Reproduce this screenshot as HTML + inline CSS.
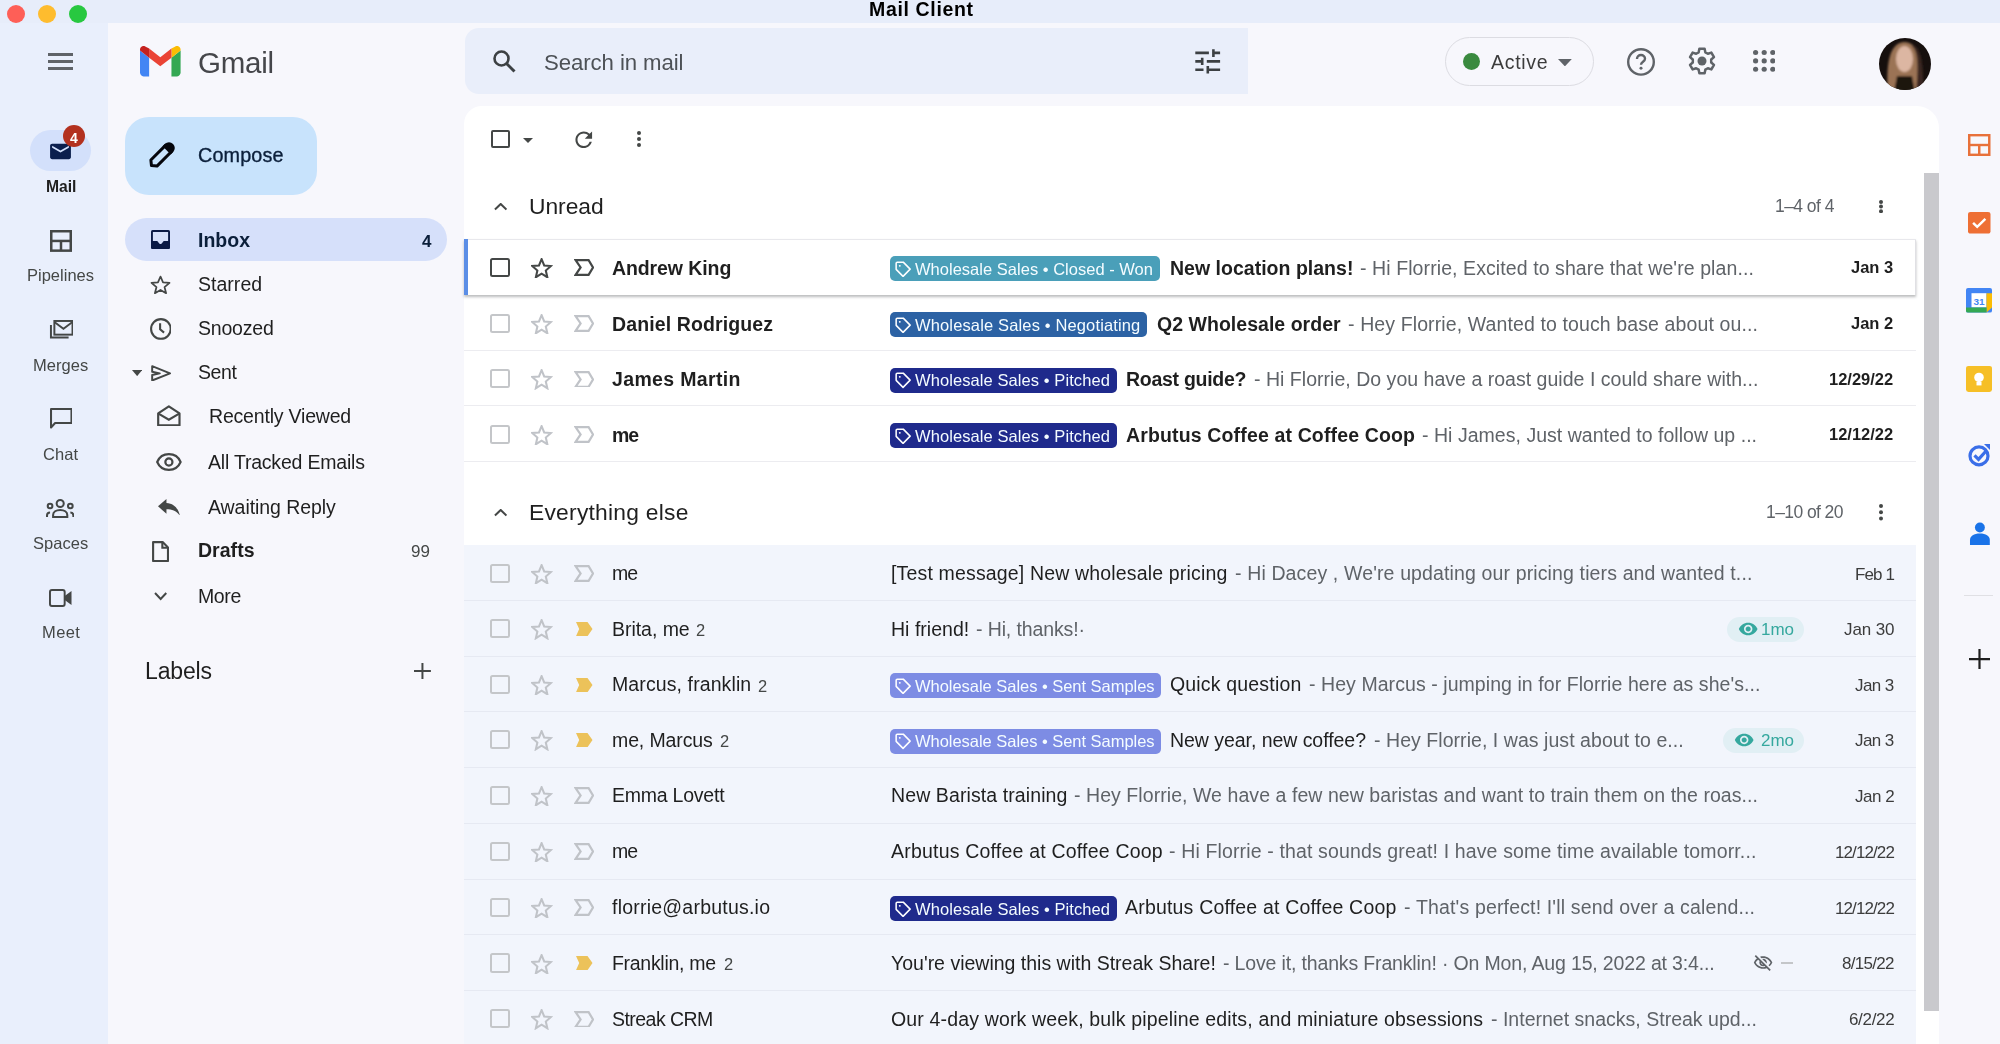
<!DOCTYPE html>
<html><head><meta charset="utf-8"><title>Mail Client</title>
<style>
html,body{margin:0;padding:0;width:2000px;height:1044px;overflow:hidden;background:#f7f7fc;}
body{position:relative;font-family:"Liberation Sans",sans-serif;}
.a{position:absolute;display:block;}
.t{position:absolute;white-space:nowrap;line-height:1;will-change:transform;}
</style></head><body>
<div class="a" style="left:0.00px;top:0.00px;width:2000.00px;height:23.00px;background:#e7edfa"></div>
<div class="a" style="left:0.00px;top:23.00px;width:108.00px;height:1021.00px;background:#e9effc"></div>
<div class="a" style="left:108.00px;top:23.00px;width:1892.00px;height:1021.00px;background:#f7f7fc"></div>
<div class="a" style="left:7.00px;top:5.00px;width:18.00px;height:18.00px;border-radius:50%;background:#fe5f57"></div>
<div class="a" style="left:37.50px;top:5.00px;width:18.00px;height:18.00px;border-radius:50%;background:#febc2e"></div>
<div class="a" style="left:68.50px;top:5.00px;width:18.00px;height:18.00px;border-radius:50%;background:#28c840"></div>
<div class="t " style="top:-0.01px;font-size:19.5px;color:#000;font-weight:bold;letter-spacing:0.649px;left:0.00px;left:868.75px">Mail Client</div>
<div class="a" style="left:48.00px;top:53.25px;width:25.00px;height:2.50px;background:#5f6368"></div>
<div class="a" style="left:48.00px;top:60.25px;width:25.00px;height:2.50px;background:#5f6368"></div>
<div class="a" style="left:48.00px;top:67.25px;width:25.00px;height:2.50px;background:#5f6368"></div>
<div class="a" style="left:30.00px;top:130.00px;width:60.70px;height:41.00px;border-radius:21px;background:#d3e0fb"></div>
<svg class="a" style="left:48.00px;top:140.00px;width:25.00px;height:23.00px;" viewBox="0 0 24 24" preserveAspectRatio="none"><path fill="#0b1f4d" d="M20 4H4c-1.1 0-2 .9-2 2v12c0 1.1.9 2 2 2h16c1.1 0 2-.9 2-2V6c0-1.1-.9-2-2-2zm0 4l-8 5-8-5V6l8 5 8-5v2z"/></svg>
<div class="a" style="left:63.30px;top:124.90px;width:22.00px;height:22.00px;border-radius:50%;background:#b3311f"></div>
<div class="t " style="top:130.75px;font-size:14px;color:#fff;font-weight:bold;left:0.00px;left:70.3px">4</div>
<div class="t " style="top:179.31px;font-size:15.7px;color:#1f1f1f;font-weight:bold;letter-spacing:-0.011px;left:45.50px;">Mail</div>
<svg class="a" style="left:49.70px;top:229.80px;width:22.00px;height:21.90px;" viewBox="0 0 22 22" preserveAspectRatio="none"><rect x="1.25" y="1.25" width="19.5" height="19.5" fill="none" stroke="#444746" stroke-width="2.5"/><line x1="1" y1="11" x2="21" y2="11" stroke="#444746" stroke-width="2.5"/><line x1="11" y1="11" x2="11" y2="21" stroke="#444746" stroke-width="2.5"/></svg>
<div class="t " style="top:267.33px;font-size:16.5px;color:#444746;letter-spacing:0.005px;left:27.00px;">Pipelines</div>
<svg class="a" style="left:47.50px;top:319.50px;width:25.50px;height:21.50px;" viewBox="0 0 26 22" preserveAspectRatio="none"><rect x="6.5" y="1" width="18.5" height="14" fill="none" stroke="#444746" stroke-width="2"/><path d="M6.5 2l9.25 7 9.25-7" fill="none" stroke="#444746" stroke-width="2"/><path d="M3 5v13h18" fill="none" stroke="#444746" stroke-width="2"/></svg>
<div class="t " style="top:357.13px;font-size:16.5px;color:#444746;letter-spacing:0.036px;left:32.80px;">Merges</div>
<svg class="a" style="left:49.50px;top:408.00px;width:22.50px;height:21.00px;" viewBox="0 0 22 21" preserveAspectRatio="none"><path d="M1 1h20v14H5l-4 4.5z" fill="none" stroke="#444746" stroke-width="2" stroke-linejoin="round"/></svg>
<div class="t " style="top:446.03px;font-size:16.5px;color:#444746;letter-spacing:0.115px;left:42.80px;">Chat</div>
<svg class="a" style="left:46.00px;top:499.00px;width:28.40px;height:19.00px;" viewBox="0 0 28 19" preserveAspectRatio="none"><circle cx="14" cy="4.5" r="3.5" fill="none" stroke="#444746" stroke-width="2"/><circle cx="4" cy="7" r="2.3" fill="none" stroke="#444746" stroke-width="2"/><circle cx="24" cy="7" r="2.3" fill="none" stroke="#444746" stroke-width="2"/><path d="M7 18v-2c0-3 3-5 7-5s7 2 7 5v2z" fill="none" stroke="#444746" stroke-width="2"/><path d="M1 18v-1.5c0-2 1-3 3-3M27 18v-1.5c0-2-1-3-3-3" fill="none" stroke="#444746" stroke-width="2"/></svg>
<div class="t " style="top:534.93px;font-size:16.5px;color:#444746;letter-spacing:0.033px;left:32.80px;">Spaces</div>
<svg class="a" style="left:48.50px;top:589.00px;width:23.50px;height:18.00px;" viewBox="0 0 24 18" preserveAspectRatio="none"><rect x="1" y="1" width="15" height="16" rx="2" fill="none" stroke="#444746" stroke-width="2"/><path d="M16 7l7-5v14l-7-5z" fill="#444746"/></svg>
<div class="t " style="top:623.63px;font-size:16.5px;color:#444746;letter-spacing:0.406px;left:41.80px;">Meet</div>
<svg class="a" style="left:140.20px;top:46.20px;width:40.60px;height:30.40px;" viewBox="0 0 40 30" preserveAspectRatio="none"><path d="M0 4.5v21.5c0 2 1.3 4 3.5 4H9V11.5z" fill="#4285f4"/><path d="M31 11.5V30h5.5c2.2 0 3.5-2 3.5-4V4.5z" fill="#34a853"/><path d="M31 2.5v9l9-7v-1c0-3-3.4-4.6-5.6-2.8z" fill="#fbbc04"/><path d="M9 11.5v-9l11 8.5 11-8.5v9l-11 8.5z" fill="#ea4335"/><path d="M0 3.5v1l9 7v-9L5.6.7C3.4-1.1 0 .5 0 3.5z" fill="#c5221f"/></svg>
<div class="t " style="top:48.23px;font-size:29.5px;color:#45464a;letter-spacing:-0.259px;left:198.00px;">Gmail</div>
<div class="a" style="left:124.50px;top:117.00px;width:192.50px;height:78.00px;border-radius:24px;background:#c8e3fc"></div>
<svg class="a" style="left:146.70px;top:141.70px;width:28.00px;height:28.00px;" viewBox="0 0 28 28" preserveAspectRatio="none"><g transform="rotate(-45 14 14)"><path d="M0.5 14L4 9.7H25v8.6H4z" fill="none" stroke="#05060c" stroke-width="3" stroke-linejoin="round"/><path d="M22 8.2h3.3a5.8 5.8 0 0 1 0 11.6H22z" fill="#05060c"/></g></svg>
<div class="t " style="top:146.14px;font-size:19.8px;color:#0b1f3a;letter-spacing:0.126px;left:197.50px;-webkit-text-stroke:0.35px #0b1f3a">Compose</div>
<div class="a" style="left:124.50px;top:218.00px;width:322.50px;height:43.00px;border-radius:22px;background:#d6e0fa"></div>
<svg class="a" style="left:151.00px;top:230.00px;width:19.00px;height:19.20px;" viewBox="0 0 19 19.2" preserveAspectRatio="none"><rect x="0" y="0" width="19" height="19.2" rx="1.6" fill="#0b1a45"/><path d="M1.9 1.9h15.2v9.2h-4.1c-.6 0-1 .9-1.6 1.7-.7.9-1.2 1.3-1.9 1.3s-1.2-.4-1.9-1.3c-.6-.8-1-1.7-1.6-1.7H1.9z" fill="#d6e0fa"/></svg>
<div class="t " style="top:230.59px;font-size:19.5px;color:#0b1f3a;font-weight:bold;letter-spacing:0.001px;left:197.70px;">Inbox</div>
<div class="t " style="top:232.71px;font-size:17px;color:#0b1f3a;font-weight:bold;right:1569.00px;">4</div>
<svg class="a" style="left:150.00px;top:275.00px;width:21.00px;height:19.50px;" viewBox="0 0 24 23" preserveAspectRatio="none"><path d="M12 1.8l2.9 6.9 7.4.6-5.7 4.9 1.8 7.3L12 17.6l-6.4 3.9 1.8-7.3L1.7 9.3l7.4-.6z" fill="none" stroke="#444746" stroke-width="2" stroke-linejoin="round"/></svg>
<div class="t " style="top:274.79px;font-size:19.5px;color:#1f1f1f;letter-spacing:0.025px;left:197.60px;">Starred</div>
<svg class="a" style="left:149.70px;top:317.80px;width:21.80px;height:21.90px;" viewBox="0 0 22 22" preserveAspectRatio="none"><circle cx="11" cy="11" r="9.9" fill="none" stroke="#444746" stroke-width="2.1"/><path d="M10.2 5.2v6.2l4 3.3" fill="none" stroke="#444746" stroke-width="2.1"/></svg>
<div class="t " style="top:319.09px;font-size:19.5px;color:#1f1f1f;letter-spacing:-0.197px;left:197.60px;">Snoozed</div>
<svg class="a" style="left:131.70px;top:369.80px;width:10.30px;height:6.10px;" viewBox="0 0 10 6" preserveAspectRatio="none"><path d="M0 0h10L5 6z" fill="#444746"/></svg>
<svg class="a" style="left:150.70px;top:364.80px;width:20.50px;height:16.70px;" viewBox="0 0 21 17" preserveAspectRatio="none"><path d="M1.2 1.2L19.5 8.5 1.2 15.8V10.2L9 8.5 1.2 6.8z" fill="none" stroke="#444746" stroke-width="2" stroke-linejoin="round"/></svg>
<div class="t " style="top:363.09px;font-size:19.5px;color:#1f1f1f;letter-spacing:-0.438px;left:197.60px;">Sent</div>
<svg class="a" style="left:157.00px;top:404.80px;width:23.70px;height:21.60px;" viewBox="0 0 24 22" preserveAspectRatio="none"><path d="M1.2 8.5L12 1.3l10.8 7.2V20.8H1.2z" fill="none" stroke="#444746" stroke-width="2.2" stroke-linejoin="round"/><path d="M1.5 8.8L12 15l10.5-6.2" fill="none" stroke="#444746" stroke-width="2.2"/></svg>
<div class="t " style="top:407.09px;font-size:19.5px;color:#1f1f1f;letter-spacing:-0.192px;left:208.80px;">Recently Viewed</div>
<svg class="a" style="left:156.00px;top:453.00px;width:25.80px;height:18.00px;" viewBox="0 0 26 18" preserveAspectRatio="none"><path d="M13 1.2C7.3 1.2 3 4.8 1.2 9 3 13.2 7.3 16.8 13 16.8S23 13.2 24.8 9C23 4.8 18.7 1.2 13 1.2z" fill="none" stroke="#444746" stroke-width="2.2"/><circle cx="13" cy="9" r="3.6" fill="none" stroke="#444746" stroke-width="2.2"/></svg>
<div class="t " style="top:452.69px;font-size:19.5px;color:#1f1f1f;letter-spacing:-0.205px;left:208.40px;">All Tracked Emails</div>
<svg class="a" style="left:157.90px;top:498.50px;width:21.90px;height:16.70px;" viewBox="0 0 22 17" preserveAspectRatio="none"><path d="M8.5 0L0 7.5 8.5 15V10.5c6 0 10 1.8 13.5 6.5C20.5 10 16.5 4.5 8.5 4z" fill="#444746"/></svg>
<div class="t " style="top:497.59px;font-size:19.5px;color:#1f1f1f;letter-spacing:-0.064px;left:208.40px;">Awaiting Reply</div>
<svg class="a" style="left:151.90px;top:540.90px;width:17.10px;height:21.10px;" viewBox="0 0 17 21" preserveAspectRatio="none"><path d="M1.1 1.1h9.5l5.3 5.3v13.5H1.1z" fill="none" stroke="#444746" stroke-width="2.1" stroke-linejoin="round"/><path d="M10.3 1.1v5.6h5.6" fill="none" stroke="#444746" stroke-width="2.1"/></svg>
<div class="t " style="top:541.09px;font-size:19.5px;color:#1f1f1f;font-weight:bold;letter-spacing:0.030px;left:198.00px;">Drafts</div>
<div class="t " style="top:543.21px;font-size:17px;color:#444746;right:1570.00px;">99</div>
<svg class="a" style="left:154.00px;top:592.00px;width:13.30px;height:8.60px;" viewBox="0 0 13 8" preserveAspectRatio="none"><path d="M1 1l5.5 5.5L12 1" fill="none" stroke="#444746" stroke-width="2"/></svg>
<div class="t " style="top:587.09px;font-size:19.5px;color:#1f1f1f;letter-spacing:-0.377px;left:198.00px;">More</div>
<div class="t " style="top:659.53px;font-size:23px;color:#1f1f1f;letter-spacing:-0.136px;left:144.90px;">Labels</div>
<svg class="a" style="left:413.90px;top:663.00px;width:16.90px;height:16.00px;" viewBox="0 0 17 16" preserveAspectRatio="none"><path d="M8.5 0v16M0 8h17" stroke="#444746" stroke-width="2"/></svg>
<div class="a" style="left:464.50px;top:28.00px;width:783.50px;height:66.00px;border-radius:14px 0 0 14px;background:#e9eefa"></div>
<svg class="a" style="left:492.00px;top:49.00px;width:24.00px;height:24.00px;" viewBox="0 0 24 24" preserveAspectRatio="none"><circle cx="9.5" cy="9.5" r="7" fill="none" stroke="#3c4043" stroke-width="2.6"/><path d="M14.5 14.5l8 8" stroke="#3c4043" stroke-width="3"/></svg>
<div class="t " style="top:52.41px;font-size:22.2px;color:#4d5156;letter-spacing:-0.082px;left:544.00px;">Search in mail</div>
<svg class="a" style="left:1194.00px;top:48.00px;width:28.00px;height:27.00px;" viewBox="0 0 28 27" preserveAspectRatio="none"><path d="M1.3 4.9H14.9M19.4 1.3V9M19.4 4.9H26.1M1.3 13.4H8.2M8.2 9.7V17M12.8 13.4H26.1M1.3 21.7H9.5M13.8 17.9V25.4M13.8 21.7H26.1" stroke="#3c4043" stroke-width="2.6" fill="none"/></svg>
<div class="a" style="left:1444.70px;top:36.60px;width:149.20px;height:49.40px;border-radius:25px;border:1.5px solid #dcdce2;box-sizing:border-box"></div>
<div class="a" style="left:1462.50px;top:53.30px;width:17.00px;height:17.00px;border-radius:50%;background:#3a8a3f"></div>
<div class="t " style="top:53.19px;font-size:19.5px;color:#3c3c3c;letter-spacing:0.700px;left:1491.00px;">Active</div>
<svg class="a" style="left:1558.00px;top:58.60px;width:13.80px;height:7.40px;" viewBox="0 0 14 7" preserveAspectRatio="none"><path d="M0 0h14L7 7z" fill="#5f6368"/></svg>
<svg class="a" style="left:1627.00px;top:47.80px;width:28.00px;height:27.80px;" viewBox="0 0 28 28" preserveAspectRatio="none"><circle cx="14" cy="14" r="12.8" fill="none" stroke="#5f6368" stroke-width="2.4"/><path d="M10 11c0-2.3 1.8-4 4-4s4 1.7 4 3.8c0 3-4 3-4 6" fill="none" stroke="#5f6368" stroke-width="2.4"/><circle cx="14" cy="20.5" r="1.5" fill="#5f6368"/></svg>
<svg class="a" style="left:1687.30px;top:46.30px;width:30.00px;height:30.00px;" viewBox="0 0 30 30" preserveAspectRatio="none"><path d="M11.67 6.32 L12.38 2.68 L17.62 2.68 L18.33 6.32 L20.85 7.77 L24.36 6.57 L26.98 11.11 L24.19 13.55 L24.19 16.45 L26.98 18.89 L24.36 23.43 L20.85 22.23 L18.33 23.68 L17.62 27.32 L12.38 27.32 L11.67 23.68 L9.15 22.23 L5.64 23.43 L3.02 18.89 L5.81 16.45 L5.81 13.55 L3.02 11.11 L5.64 6.57 L9.15 7.77Z" fill="none" stroke="#5f6368" stroke-width="2.5" stroke-linejoin="round"/><circle cx="15" cy="15" r="4.5" fill="#5f6368"/></svg>
<svg class="a" style="left:1752.60px;top:50.40px;width:22.40px;height:21.80px;" viewBox="0 0 22 22" preserveAspectRatio="none"><circle cx="2.55" cy="2.55" r="2.55" fill="#5f6368"/><circle cx="2.55" cy="11.0" r="2.55" fill="#5f6368"/><circle cx="2.55" cy="19.45" r="2.55" fill="#5f6368"/><circle cx="11.0" cy="2.55" r="2.55" fill="#5f6368"/><circle cx="11.0" cy="11.0" r="2.55" fill="#5f6368"/><circle cx="11.0" cy="19.45" r="2.55" fill="#5f6368"/><circle cx="19.45" cy="2.55" r="2.55" fill="#5f6368"/><circle cx="19.45" cy="11.0" r="2.55" fill="#5f6368"/><circle cx="19.45" cy="19.45" r="2.55" fill="#5f6368"/></svg>
<svg class="a" style="left:1878.6px;top:38.2px;width:52px;height:52px" viewBox="0 0 52 52"><defs><clipPath id="av"><circle cx="26" cy="26" r="26"/></clipPath><filter id="bl"><feGaussianBlur stdDeviation="1.2"/></filter></defs><g clip-path="url(#av)"><rect width="52" height="52" fill="#160f0d"/><g filter="url(#bl)"><path d="M9 56 C7 30 9 5 25 4 C41 4 44 28 40 56z" fill="#9b7355"/><path d="M33 8 C40 14 39 34 37 56 L44 56 C45 30 43 10 33 6z" fill="#3a2820"/><ellipse cx="25.5" cy="21" rx="8.5" ry="13" fill="#dcb6a2"/><path d="M18 38h15l3 16H15z" fill="#1c1411"/></g></g></svg>
<div class="a" style="left:464.00px;top:106.00px;width:1475.00px;height:938.00px;background:#fff;border-top-right-radius:22px;border-top-left-radius:18px"></div>
<div class="a" style="left:490.50px;top:130.00px;width:19.20px;height:18.40px;border:2.2px solid #444746;border-radius:2px;box-sizing:border-box"></div>
<svg class="a" style="left:523.00px;top:137.50px;width:10.00px;height:5.00px;" viewBox="0 0 10 5" preserveAspectRatio="none"><path d="M0 0h10L5 5z" fill="#444746"/></svg>
<svg class="a" style="left:575.00px;top:131.00px;width:17.50px;height:17.50px;" viewBox="3.6 3.6 16.8 16.8" preserveAspectRatio="none"><path fill="#444746" d="M17.65 6.35A7.958 7.958 0 0 0 12 4c-4.42 0-7.99 3.58-7.99 8s3.57 8 7.99 8c3.73 0 6.84-2.55 7.73-6h-2.08A5.99 5.99 0 0 1 12 18c-3.31 0-6-2.69-6-6s2.69-6 6-6c1.66 0 3.14.69 4.22 1.78L13 11h7V4l-2.35 2.35z"/></svg>
<svg class="a" style="left:637.00px;top:131.00px;width:4.00px;height:16.00px;" viewBox="0 0 4 16" preserveAspectRatio="none"><circle cx="2" cy="2" r="2" fill="#444746"/><circle cx="2" cy="8" r="2" fill="#444746"/><circle cx="2" cy="14" r="2" fill="#444746"/></svg>
<div class="a" style="left:1924.30px;top:173.00px;width:14.60px;height:838.00px;background:#c9c9cd"></div>
<svg class="a" style="left:493.50px;top:203.40px;width:13.40px;height:7.50px;" viewBox="0 0 14 8" preserveAspectRatio="none"><path d="M1 7l6-6 6 6" fill="none" stroke="#444746" stroke-width="2.1"/></svg>
<div class="t " style="top:195.30px;font-size:22.8px;color:#1f1f1f;letter-spacing:-0.016px;left:529.40px;">Unread</div>
<div class="t " style="top:197.59px;font-size:17.5px;color:#5f6368;letter-spacing:-0.550px;left:1775.20px;">1–4 of 4</div>
<svg class="a" style="left:1878.60px;top:199.70px;width:4.00px;height:13.20px;" viewBox="0 0 4 13.20" preserveAspectRatio="none"><circle cx="2" cy="2" r="2" fill="#444746"/><circle cx="2" cy="6.60" r="2" fill="#444746"/><circle cx="2" cy="11.20" r="2" fill="#444746"/></svg>
<svg class="a" style="left:493.50px;top:509.40px;width:13.40px;height:7.50px;" viewBox="0 0 14 8" preserveAspectRatio="none"><path d="M1 7l6-6 6 6" fill="none" stroke="#444746" stroke-width="2.1"/></svg>
<div class="t " style="top:501.30px;font-size:22.8px;color:#1f1f1f;letter-spacing:0.251px;left:529.40px;">Everything else</div>
<div class="t " style="top:503.59px;font-size:17.5px;color:#5f6368;letter-spacing:-0.580px;left:1766.00px;">1–10 of 20</div>
<svg class="a" style="left:1878.60px;top:504.20px;width:4.00px;height:16.50px;" viewBox="0 0 4 16.50" preserveAspectRatio="none"><circle cx="2" cy="2" r="2" fill="#444746"/><circle cx="2" cy="8.25" r="2" fill="#444746"/><circle cx="2" cy="14.50" r="2" fill="#444746"/></svg>
<div class="a" style="left:464.00px;top:461.00px;width:1452.00px;height:1.00px;background:#ececf0"></div>
<div class="a" style="left:464.00px;top:349.80px;width:1452.00px;height:1.00px;background:#ececf0"></div>
<div class="a" style="left:464.00px;top:405.30px;width:1452.00px;height:1.00px;background:#ececf0"></div>
<div class="a" style="left:464.00px;top:460.80px;width:1452.00px;height:1.00px;background:#ececf0"></div>
<div class="a" style="left:464.00px;top:239.00px;width:1452.00px;height:56.40px;background:#fff;box-shadow:0 1.5px 2.5px rgba(60,64,67,.35), inset 0 1px 0 #e8e8ec, inset -1px 0 0 #e0e0e4;"></div>
<div class="a" style="left:464.30px;top:239.00px;width:3.70px;height:56.00px;background:#5b8ee6"></div>
<div class="a" style="left:490.30px;top:257.70px;width:19.50px;height:19.30px;border:2px solid #444746;border-radius:2.5px;box-sizing:border-box"></div>
<svg class="a" style="left:531.40px;top:257.90px;width:21.20px;height:20.60px;" viewBox="0.6 0.8 22.8 21.6" preserveAspectRatio="none"><path d="M12 2L14.81 8.63L22 9.24L16.54 13.97L18.18 21L12 17.27L5.82 21L7.46 13.97L2 9.24L9.19 8.63Z" fill="none" stroke="#444746" stroke-width="2.2" stroke-linejoin="miter" stroke-miterlimit="3"/></svg>
<svg class="a" style="left:574.10px;top:259.00px;width:20.30px;height:16.90px;" viewBox="0 0 20.3 16.9" preserveAspectRatio="none"><path d="M1.6 1.1H14.6L19 8.45L14.6 15.8H1.6L6.6 8.45Z" fill="none" stroke="#444746" stroke-width="2.2" stroke-linejoin="miter"/></svg>
<div class="t " style="top:258.89px;font-size:19.5px;color:#1f1f1f;font-weight:bold;letter-spacing:-0.095px;left:611.70px;">Andrew King</div>
<div class="a" style="left:889.60px;top:256.30px;width:270.10px;height:25.00px;border-radius:5px;background:#4a9fb9"></div>
<svg class="a" style="left:895.30px;top:260.80px;width:16.30px;height:16.50px;" viewBox="0 0 17 17" preserveAspectRatio="none"><path d="M1.2 8.6V2.4c0-.7.5-1.2 1.2-1.2h6.2l7.2 7.2-7.4 7.4z" fill="none" stroke="#fff" stroke-width="1.6" stroke-linejoin="round"/><circle cx="5" cy="5" r="1" fill="#fff"/></svg>
<div class="t " style="top:260.93px;font-size:16.5px;color:#f4fcff;letter-spacing:0.017px;left:915.40px;">Wholesale Sales • Closed - Won</div>
<div class="t " style="top:258.89px;font-size:19.5px;color:#1f1f1f;font-weight:bold;letter-spacing:0.016px;left:1169.60px;">New location plans!</div>
<div class="t " style="top:258.89px;font-size:19.5px;color:#5f6368;letter-spacing:0.089px;left:1360.00px;">- Hi Florrie, Excited to share that we're plan...</div>
<div class="t " style="top:259.23px;font-size:16.5px;color:#1f1f1f;font-weight:bold;right:106.50px;">Jan 3</div>
<div class="a" style="left:490.30px;top:313.70px;width:19.50px;height:19.30px;border:2px solid #c4c6c9;border-radius:2.5px;box-sizing:border-box"></div>
<svg class="a" style="left:531.40px;top:313.90px;width:21.20px;height:20.60px;" viewBox="0.6 0.8 22.8 21.6" preserveAspectRatio="none"><path d="M12 2L14.81 8.63L22 9.24L16.54 13.97L18.18 21L12 17.27L5.82 21L7.46 13.97L2 9.24L9.19 8.63Z" fill="none" stroke="#c0c3c8" stroke-width="2.2" stroke-linejoin="miter" stroke-miterlimit="3"/></svg>
<svg class="a" style="left:574.10px;top:315.00px;width:20.30px;height:16.90px;" viewBox="0 0 20.3 16.9" preserveAspectRatio="none"><path d="M1.6 1.1H14.6L19 8.45L14.6 15.8H1.6L6.6 8.45Z" fill="none" stroke="#c0c3c8" stroke-width="2.2" stroke-linejoin="miter"/></svg>
<div class="t " style="top:314.89px;font-size:19.5px;color:#1f1f1f;font-weight:bold;letter-spacing:0.115px;left:611.70px;">Daniel Rodriguez</div>
<div class="a" style="left:889.60px;top:312.30px;width:257.40px;height:25.00px;border-radius:5px;background:#2c62a4"></div>
<svg class="a" style="left:895.30px;top:316.80px;width:16.30px;height:16.50px;" viewBox="0 0 17 17" preserveAspectRatio="none"><path d="M1.2 8.6V2.4c0-.7.5-1.2 1.2-1.2h6.2l7.2 7.2-7.4 7.4z" fill="none" stroke="#fff" stroke-width="1.6" stroke-linejoin="round"/><circle cx="5" cy="5" r="1" fill="#fff"/></svg>
<div class="t " style="top:316.93px;font-size:16.5px;color:#f4fcff;letter-spacing:0.142px;left:915.40px;">Wholesale Sales • Negotiating</div>
<div class="t " style="top:314.89px;font-size:19.5px;color:#1f1f1f;font-weight:bold;letter-spacing:0.027px;left:1156.60px;">Q2 Wholesale order</div>
<div class="t " style="top:314.89px;font-size:19.5px;color:#5f6368;letter-spacing:0.114px;left:1347.50px;">- Hey Florrie, Wanted to touch base about ou...</div>
<div class="t " style="top:315.23px;font-size:16.5px;color:#1f1f1f;font-weight:bold;right:106.50px;">Jan 2</div>
<div class="a" style="left:490.30px;top:369.20px;width:19.50px;height:19.30px;border:2px solid #c4c6c9;border-radius:2.5px;box-sizing:border-box"></div>
<svg class="a" style="left:531.40px;top:369.40px;width:21.20px;height:20.60px;" viewBox="0.6 0.8 22.8 21.6" preserveAspectRatio="none"><path d="M12 2L14.81 8.63L22 9.24L16.54 13.97L18.18 21L12 17.27L5.82 21L7.46 13.97L2 9.24L9.19 8.63Z" fill="none" stroke="#c0c3c8" stroke-width="2.2" stroke-linejoin="miter" stroke-miterlimit="3"/></svg>
<svg class="a" style="left:574.10px;top:370.50px;width:20.30px;height:16.90px;" viewBox="0 0 20.3 16.9" preserveAspectRatio="none"><path d="M1.6 1.1H14.6L19 8.45L14.6 15.8H1.6L6.6 8.45Z" fill="none" stroke="#c0c3c8" stroke-width="2.2" stroke-linejoin="miter"/></svg>
<div class="t " style="top:370.39px;font-size:19.5px;color:#1f1f1f;font-weight:bold;letter-spacing:0.351px;left:611.70px;">James Martin</div>
<div class="a" style="left:889.60px;top:367.80px;width:227.00px;height:25.00px;border-radius:5px;background:#1f2a8c"></div>
<svg class="a" style="left:895.30px;top:372.30px;width:16.30px;height:16.50px;" viewBox="0 0 17 17" preserveAspectRatio="none"><path d="M1.2 8.6V2.4c0-.7.5-1.2 1.2-1.2h6.2l7.2 7.2-7.4 7.4z" fill="none" stroke="#fff" stroke-width="1.6" stroke-linejoin="round"/><circle cx="5" cy="5" r="1" fill="#fff"/></svg>
<div class="t " style="top:372.43px;font-size:16.5px;color:#f4fcff;letter-spacing:0.084px;left:915.40px;">Wholesale Sales • Pitched</div>
<div class="t " style="top:370.39px;font-size:19.5px;color:#1f1f1f;font-weight:bold;letter-spacing:-0.282px;left:1126.00px;">Roast guide?</div>
<div class="t " style="top:370.39px;font-size:19.5px;color:#5f6368;letter-spacing:0.025px;left:1254.40px;">- Hi Florrie, Do you have a roast guide I could share with...</div>
<div class="t " style="top:370.73px;font-size:16.5px;color:#1f1f1f;font-weight:bold;right:106.50px;">12/29/22</div>
<div class="a" style="left:490.30px;top:424.70px;width:19.50px;height:19.30px;border:2px solid #c4c6c9;border-radius:2.5px;box-sizing:border-box"></div>
<svg class="a" style="left:531.40px;top:424.90px;width:21.20px;height:20.60px;" viewBox="0.6 0.8 22.8 21.6" preserveAspectRatio="none"><path d="M12 2L14.81 8.63L22 9.24L16.54 13.97L18.18 21L12 17.27L5.82 21L7.46 13.97L2 9.24L9.19 8.63Z" fill="none" stroke="#c0c3c8" stroke-width="2.2" stroke-linejoin="miter" stroke-miterlimit="3"/></svg>
<svg class="a" style="left:574.10px;top:426.00px;width:20.30px;height:16.90px;" viewBox="0 0 20.3 16.9" preserveAspectRatio="none"><path d="M1.6 1.1H14.6L19 8.45L14.6 15.8H1.6L6.6 8.45Z" fill="none" stroke="#c0c3c8" stroke-width="2.2" stroke-linejoin="miter"/></svg>
<div class="t " style="top:425.89px;font-size:19.5px;color:#1f1f1f;font-weight:bold;letter-spacing:-1.184px;left:611.70px;">me</div>
<div class="a" style="left:889.60px;top:423.30px;width:227.00px;height:25.00px;border-radius:5px;background:#1f2a8c"></div>
<svg class="a" style="left:895.30px;top:427.80px;width:16.30px;height:16.50px;" viewBox="0 0 17 17" preserveAspectRatio="none"><path d="M1.2 8.6V2.4c0-.7.5-1.2 1.2-1.2h6.2l7.2 7.2-7.4 7.4z" fill="none" stroke="#fff" stroke-width="1.6" stroke-linejoin="round"/><circle cx="5" cy="5" r="1" fill="#fff"/></svg>
<div class="t " style="top:427.93px;font-size:16.5px;color:#f4fcff;letter-spacing:0.084px;left:915.40px;">Wholesale Sales • Pitched</div>
<div class="t " style="top:425.89px;font-size:19.5px;color:#1f1f1f;font-weight:bold;letter-spacing:0.146px;left:1126.00px;">Arbutus Coffee at Coffee Coop</div>
<div class="t " style="top:425.89px;font-size:19.5px;color:#5f6368;letter-spacing:0.031px;left:1422.40px;">- Hi James, Just wanted to follow up ...</div>
<div class="t " style="top:426.23px;font-size:16.5px;color:#1f1f1f;font-weight:bold;right:106.50px;">12/12/22</div>
<div class="a" style="left:464.00px;top:545.00px;width:1452.00px;height:499.00px;background:#f2f5fc"></div>
<div class="a" style="left:464.00px;top:600.00px;width:1452.00px;height:1.00px;background:#e6e9f2"></div>
<div class="a" style="left:464.00px;top:655.50px;width:1452.00px;height:1.00px;background:#e6e9f2"></div>
<div class="a" style="left:464.00px;top:711.00px;width:1452.00px;height:1.00px;background:#e6e9f2"></div>
<div class="a" style="left:464.00px;top:766.50px;width:1452.00px;height:1.00px;background:#e6e9f2"></div>
<div class="a" style="left:464.00px;top:822.50px;width:1452.00px;height:1.00px;background:#e6e9f2"></div>
<div class="a" style="left:464.00px;top:878.50px;width:1452.00px;height:1.00px;background:#e6e9f2"></div>
<div class="a" style="left:464.00px;top:934.20px;width:1452.00px;height:1.00px;background:#e6e9f2"></div>
<div class="a" style="left:464.00px;top:990.00px;width:1452.00px;height:1.00px;background:#e6e9f2"></div>
<div class="a" style="left:490.30px;top:563.70px;width:19.50px;height:19.30px;border:2px solid #c4c6c9;border-radius:2.5px;box-sizing:border-box"></div>
<svg class="a" style="left:531.40px;top:563.90px;width:21.20px;height:20.60px;" viewBox="0.6 0.8 22.8 21.6" preserveAspectRatio="none"><path d="M12 2L14.81 8.63L22 9.24L16.54 13.97L18.18 21L12 17.27L5.82 21L7.46 13.97L2 9.24L9.19 8.63Z" fill="none" stroke="#c0c3c8" stroke-width="2.2" stroke-linejoin="miter" stroke-miterlimit="3"/></svg>
<svg class="a" style="left:574.10px;top:565.00px;width:20.30px;height:16.90px;" viewBox="0 0 20.3 16.9" preserveAspectRatio="none"><path d="M1.6 1.1H14.6L19 8.45L14.6 15.8H1.6L6.6 8.45Z" fill="none" stroke="#c0c3c8" stroke-width="2.2" stroke-linejoin="miter"/></svg>
<div class="t " style="top:564.09px;font-size:19.5px;color:#1f1f1f;letter-spacing:-0.990px;left:612.30px;">me</div>
<div class="t " style="top:564.09px;font-size:19.5px;color:#1f1f1f;letter-spacing:0.162px;left:891.25px;">[Test message] New wholesale pricing</div>
<div class="t " style="top:564.09px;font-size:19.5px;color:#5f6368;letter-spacing:0.131px;left:1235.00px;">- Hi Dacey , We're updating our pricing tiers and wanted t...</div>
<div class="t " style="top:565.71px;font-size:17px;color:#3c3c3c;letter-spacing:-0.900px;right:106.40px;">Feb 1</div>
<div class="a" style="left:490.30px;top:619.20px;width:19.50px;height:19.30px;border:2px solid #c4c6c9;border-radius:2.5px;box-sizing:border-box"></div>
<svg class="a" style="left:531.40px;top:619.40px;width:21.20px;height:20.60px;" viewBox="0.6 0.8 22.8 21.6" preserveAspectRatio="none"><path d="M12 2L14.81 8.63L22 9.24L16.54 13.97L18.18 21L12 17.27L5.82 21L7.46 13.97L2 9.24L9.19 8.63Z" fill="none" stroke="#c0c3c8" stroke-width="2.2" stroke-linejoin="miter" stroke-miterlimit="3"/></svg>
<svg class="a" style="left:576.00px;top:622.00px;width:16.50px;height:14.20px;" viewBox="0 0 16.5 14.2" preserveAspectRatio="none"><path d="M0 0H11.5L16.5 7.1L11.5 14.2H0L3.2 7.1Z" fill="#ecc25a"/></svg>
<div class="t " style="top:619.59px;font-size:19.5px;color:#1f1f1f;letter-spacing:-0.040px;left:612.30px;">Brita, me</div>
<div class="t " style="top:622.13px;font-size:16.5px;color:#444746;left:696.30px;">2</div>
<div class="t " style="top:619.59px;font-size:19.5px;color:#1f1f1f;letter-spacing:0.024px;left:890.50px;">Hi friend!</div>
<div class="t " style="top:619.59px;font-size:19.5px;color:#5f6368;letter-spacing:-0.117px;left:976.00px;">- Hi, thanks!·</div>
<div class="t " style="top:621.21px;font-size:17px;color:#3c3c3c;letter-spacing:-0.108px;right:105.61px;">Jan 30</div>
<div class="a" style="left:1727.30px;top:616.50px;width:77.00px;height:25.70px;border-radius:13px;background:#e1eff4"></div>
<svg class="a" style="left:1738.00px;top:619.30px;width:20.40px;height:20.00px;" viewBox="0 0 24 24" preserveAspectRatio="none"><path d="M12 4.5C7 4.5 2.73 7.61 1 12c1.73 4.39 6 7.5 11 7.5s9.27-3.11 11-7.5c-1.73-4.39-6-7.5-11-7.5zM12 17c-2.76 0-5-2.24-5-5s2.24-5 5-5 5 2.24 5 5-2.24 5-5 5zm0-8c-1.66 0-3 1.34-3 3s1.34 3 3 3 3-1.34 3-3-1.34-3-3-3z" fill="#35a89e"/></svg>
<div class="t " style="top:621.21px;font-size:17px;color:#35a89e;right:206.00px;">1mo</div>
<div class="a" style="left:490.30px;top:674.70px;width:19.50px;height:19.30px;border:2px solid #c4c6c9;border-radius:2.5px;box-sizing:border-box"></div>
<svg class="a" style="left:531.40px;top:674.90px;width:21.20px;height:20.60px;" viewBox="0.6 0.8 22.8 21.6" preserveAspectRatio="none"><path d="M12 2L14.81 8.63L22 9.24L16.54 13.97L18.18 21L12 17.27L5.82 21L7.46 13.97L2 9.24L9.19 8.63Z" fill="none" stroke="#c0c3c8" stroke-width="2.2" stroke-linejoin="miter" stroke-miterlimit="3"/></svg>
<svg class="a" style="left:576.00px;top:677.50px;width:16.50px;height:14.20px;" viewBox="0 0 16.5 14.2" preserveAspectRatio="none"><path d="M0 0H11.5L16.5 7.1L11.5 14.2H0L3.2 7.1Z" fill="#ecc25a"/></svg>
<div class="t " style="top:675.09px;font-size:19.5px;color:#1f1f1f;letter-spacing:0.105px;left:612.30px;">Marcus, franklin</div>
<div class="t " style="top:677.63px;font-size:16.5px;color:#444746;left:757.80px;">2</div>
<div class="a" style="left:889.60px;top:673.30px;width:271.65px;height:25.00px;border-radius:5px;background:#7d8ce4"></div>
<svg class="a" style="left:895.30px;top:677.80px;width:16.30px;height:16.50px;" viewBox="0 0 17 17" preserveAspectRatio="none"><path d="M1.2 8.6V2.4c0-.7.5-1.2 1.2-1.2h6.2l7.2 7.2-7.4 7.4z" fill="none" stroke="#fff" stroke-width="1.6" stroke-linejoin="round"/><circle cx="5" cy="5" r="1" fill="#fff"/></svg>
<div class="t " style="top:677.93px;font-size:16.5px;color:#f4fcff;letter-spacing:-0.035px;left:915.40px;">Wholesale Sales • Sent Samples</div>
<div class="t " style="top:675.09px;font-size:19.5px;color:#1f1f1f;letter-spacing:0.174px;left:1170.00px;">Quick question</div>
<div class="t " style="top:675.09px;font-size:19.5px;color:#5f6368;letter-spacing:0.065px;left:1309.00px;">- Hey Marcus - jumping in for Florrie here as she's...</div>
<div class="t " style="top:676.71px;font-size:17px;color:#3c3c3c;letter-spacing:-0.622px;right:106.12px;">Jan 3</div>
<div class="a" style="left:490.30px;top:730.20px;width:19.50px;height:19.30px;border:2px solid #c4c6c9;border-radius:2.5px;box-sizing:border-box"></div>
<svg class="a" style="left:531.40px;top:730.40px;width:21.20px;height:20.60px;" viewBox="0.6 0.8 22.8 21.6" preserveAspectRatio="none"><path d="M12 2L14.81 8.63L22 9.24L16.54 13.97L18.18 21L12 17.27L5.82 21L7.46 13.97L2 9.24L9.19 8.63Z" fill="none" stroke="#c0c3c8" stroke-width="2.2" stroke-linejoin="miter" stroke-miterlimit="3"/></svg>
<svg class="a" style="left:576.00px;top:733.00px;width:16.50px;height:14.20px;" viewBox="0 0 16.5 14.2" preserveAspectRatio="none"><path d="M0 0H11.5L16.5 7.1L11.5 14.2H0L3.2 7.1Z" fill="#ecc25a"/></svg>
<div class="t " style="top:730.59px;font-size:19.5px;color:#1f1f1f;letter-spacing:-0.117px;left:612.30px;">me, Marcus</div>
<div class="t " style="top:733.13px;font-size:16.5px;color:#444746;left:719.60px;">2</div>
<div class="a" style="left:889.60px;top:728.80px;width:271.65px;height:25.00px;border-radius:5px;background:#7d8ce4"></div>
<svg class="a" style="left:895.30px;top:733.30px;width:16.30px;height:16.50px;" viewBox="0 0 17 17" preserveAspectRatio="none"><path d="M1.2 8.6V2.4c0-.7.5-1.2 1.2-1.2h6.2l7.2 7.2-7.4 7.4z" fill="none" stroke="#fff" stroke-width="1.6" stroke-linejoin="round"/><circle cx="5" cy="5" r="1" fill="#fff"/></svg>
<div class="t " style="top:733.43px;font-size:16.5px;color:#f4fcff;letter-spacing:-0.035px;left:915.40px;">Wholesale Sales • Sent Samples</div>
<div class="t " style="top:730.59px;font-size:19.5px;color:#1f1f1f;letter-spacing:-0.046px;left:1170.00px;">New year, new coffee?</div>
<div class="t " style="top:730.59px;font-size:19.5px;color:#5f6368;letter-spacing:0.050px;left:1373.50px;">- Hey Florrie, I was just about to e...</div>
<div class="t " style="top:732.21px;font-size:17px;color:#3c3c3c;letter-spacing:-0.622px;right:106.12px;">Jan 3</div>
<div class="a" style="left:1723.20px;top:727.50px;width:81.10px;height:25.70px;border-radius:13px;background:#e1eff4"></div>
<svg class="a" style="left:1734.00px;top:730.30px;width:20.40px;height:20.00px;" viewBox="0 0 24 24" preserveAspectRatio="none"><path d="M12 4.5C7 4.5 2.73 7.61 1 12c1.73 4.39 6 7.5 11 7.5s9.27-3.11 11-7.5c-1.73-4.39-6-7.5-11-7.5zM12 17c-2.76 0-5-2.24-5-5s2.24-5 5-5 5 2.24 5 5-2.24 5-5 5zm0-8c-1.66 0-3 1.34-3 3s1.34 3 3 3 3-1.34 3-3-1.34-3-3-3z" fill="#35a89e"/></svg>
<div class="t " style="top:732.21px;font-size:17px;color:#35a89e;right:206.00px;">2mo</div>
<div class="a" style="left:490.30px;top:785.70px;width:19.50px;height:19.30px;border:2px solid #c4c6c9;border-radius:2.5px;box-sizing:border-box"></div>
<svg class="a" style="left:531.40px;top:785.90px;width:21.20px;height:20.60px;" viewBox="0.6 0.8 22.8 21.6" preserveAspectRatio="none"><path d="M12 2L14.81 8.63L22 9.24L16.54 13.97L18.18 21L12 17.27L5.82 21L7.46 13.97L2 9.24L9.19 8.63Z" fill="none" stroke="#c0c3c8" stroke-width="2.2" stroke-linejoin="miter" stroke-miterlimit="3"/></svg>
<svg class="a" style="left:574.10px;top:787.00px;width:20.30px;height:16.90px;" viewBox="0 0 20.3 16.9" preserveAspectRatio="none"><path d="M1.6 1.1H14.6L19 8.45L14.6 15.8H1.6L6.6 8.45Z" fill="none" stroke="#c0c3c8" stroke-width="2.2" stroke-linejoin="miter"/></svg>
<div class="t " style="top:786.09px;font-size:19.5px;color:#1f1f1f;letter-spacing:-0.228px;left:612.30px;">Emma Lovett</div>
<div class="t " style="top:786.09px;font-size:19.5px;color:#1f1f1f;letter-spacing:0.100px;left:890.50px;">New Barista training</div>
<div class="t " style="top:786.09px;font-size:19.5px;color:#5f6368;letter-spacing:0.061px;left:1074.00px;">- Hey Florrie, We have a few new baristas and want to train them on the roas...</div>
<div class="t " style="top:787.71px;font-size:17px;color:#3c3c3c;letter-spacing:-0.497px;right:106.00px;">Jan 2</div>
<div class="a" style="left:490.30px;top:841.70px;width:19.50px;height:19.30px;border:2px solid #c4c6c9;border-radius:2.5px;box-sizing:border-box"></div>
<svg class="a" style="left:531.40px;top:841.90px;width:21.20px;height:20.60px;" viewBox="0.6 0.8 22.8 21.6" preserveAspectRatio="none"><path d="M12 2L14.81 8.63L22 9.24L16.54 13.97L18.18 21L12 17.27L5.82 21L7.46 13.97L2 9.24L9.19 8.63Z" fill="none" stroke="#c0c3c8" stroke-width="2.2" stroke-linejoin="miter" stroke-miterlimit="3"/></svg>
<svg class="a" style="left:574.10px;top:843.00px;width:20.30px;height:16.90px;" viewBox="0 0 20.3 16.9" preserveAspectRatio="none"><path d="M1.6 1.1H14.6L19 8.45L14.6 15.8H1.6L6.6 8.45Z" fill="none" stroke="#c0c3c8" stroke-width="2.2" stroke-linejoin="miter"/></svg>
<div class="t " style="top:842.09px;font-size:19.5px;color:#1f1f1f;letter-spacing:-0.990px;left:612.30px;">me</div>
<div class="t " style="top:842.09px;font-size:19.5px;color:#1f1f1f;letter-spacing:0.205px;left:890.50px;">Arbutus Coffee at Coffee Coop</div>
<div class="t " style="top:842.09px;font-size:19.5px;color:#5f6368;letter-spacing:0.141px;left:1169.20px;">- Hi Florrie - that sounds great! I have some time available tomorr...</div>
<div class="t " style="top:843.71px;font-size:17px;color:#3c3c3c;letter-spacing:-0.900px;right:106.40px;">12/12/22</div>
<div class="a" style="left:490.30px;top:897.70px;width:19.50px;height:19.30px;border:2px solid #c4c6c9;border-radius:2.5px;box-sizing:border-box"></div>
<svg class="a" style="left:531.40px;top:897.90px;width:21.20px;height:20.60px;" viewBox="0.6 0.8 22.8 21.6" preserveAspectRatio="none"><path d="M12 2L14.81 8.63L22 9.24L16.54 13.97L18.18 21L12 17.27L5.82 21L7.46 13.97L2 9.24L9.19 8.63Z" fill="none" stroke="#c0c3c8" stroke-width="2.2" stroke-linejoin="miter" stroke-miterlimit="3"/></svg>
<svg class="a" style="left:574.10px;top:899.00px;width:20.30px;height:16.90px;" viewBox="0 0 20.3 16.9" preserveAspectRatio="none"><path d="M1.6 1.1H14.6L19 8.45L14.6 15.8H1.6L6.6 8.45Z" fill="none" stroke="#c0c3c8" stroke-width="2.2" stroke-linejoin="miter"/></svg>
<div class="t " style="top:898.09px;font-size:19.5px;color:#1f1f1f;letter-spacing:0.224px;left:612.30px;">florrie@arbutus.io</div>
<div class="a" style="left:889.60px;top:896.30px;width:227.10px;height:25.00px;border-radius:5px;background:#1f2a8c"></div>
<svg class="a" style="left:895.30px;top:900.80px;width:16.30px;height:16.50px;" viewBox="0 0 17 17" preserveAspectRatio="none"><path d="M1.2 8.6V2.4c0-.7.5-1.2 1.2-1.2h6.2l7.2 7.2-7.4 7.4z" fill="none" stroke="#fff" stroke-width="1.6" stroke-linejoin="round"/><circle cx="5" cy="5" r="1" fill="#fff"/></svg>
<div class="t " style="top:900.93px;font-size:16.5px;color:#f4fcff;letter-spacing:0.088px;left:915.40px;">Wholesale Sales • Pitched</div>
<div class="t " style="top:898.09px;font-size:19.5px;color:#1f1f1f;letter-spacing:0.191px;left:1125.40px;">Arbutus Coffee at Coffee Coop</div>
<div class="t " style="top:898.09px;font-size:19.5px;color:#5f6368;letter-spacing:0.159px;left:1404.30px;">- That's perfect! I'll send over a calend...</div>
<div class="t " style="top:899.71px;font-size:17px;color:#3c3c3c;letter-spacing:-0.900px;right:106.40px;">12/12/22</div>
<div class="a" style="left:490.30px;top:953.40px;width:19.50px;height:19.30px;border:2px solid #c4c6c9;border-radius:2.5px;box-sizing:border-box"></div>
<svg class="a" style="left:531.40px;top:953.60px;width:21.20px;height:20.60px;" viewBox="0.6 0.8 22.8 21.6" preserveAspectRatio="none"><path d="M12 2L14.81 8.63L22 9.24L16.54 13.97L18.18 21L12 17.27L5.82 21L7.46 13.97L2 9.24L9.19 8.63Z" fill="none" stroke="#c0c3c8" stroke-width="2.2" stroke-linejoin="miter" stroke-miterlimit="3"/></svg>
<svg class="a" style="left:576.00px;top:956.20px;width:16.50px;height:14.20px;" viewBox="0 0 16.5 14.2" preserveAspectRatio="none"><path d="M0 0H11.5L16.5 7.1L11.5 14.2H0L3.2 7.1Z" fill="#ecc25a"/></svg>
<div class="t " style="top:953.79px;font-size:19.5px;color:#1f1f1f;letter-spacing:-0.298px;left:612.30px;">Franklin, me</div>
<div class="t " style="top:956.33px;font-size:16.5px;color:#444746;left:724.00px;">2</div>
<div class="t " style="top:953.79px;font-size:19.5px;color:#1f1f1f;letter-spacing:-0.001px;left:890.50px;">You're viewing this with Streak Share!</div>
<div class="t " style="top:953.79px;font-size:19.5px;color:#5f6368;letter-spacing:-0.154px;left:1222.50px;">- Love it, thanks Franklin! · On Mon, Aug 15, 2022 at 3:4...</div>
<div class="t " style="top:955.41px;font-size:17px;color:#3c3c3c;letter-spacing:-0.720px;right:106.22px;">8/15/22</div>
<svg class="a" style="left:1752.60px;top:952.70px;width:20.20px;height:20.00px;" viewBox="0 0 24 24" preserveAspectRatio="none"><path fill="#5f6368" d="M12 6c3.79 0 7.17 2.13 8.82 5.5-.59 1.22-1.42 2.27-2.410 3.12l1.41 1.41c1.39-1.23 2.490-2.77 3.18-4.53C21.27 7.11 17 4 12 4c-1.27 0-2.49.2-3.64.57l1.65 1.65C10.66 6.09 11.32 6 12 6zm-1.07 1.14L13 9.21c.57.25 1.03.71 1.28 1.28l2.07 2.07c.08-.34.14-.7.14-1.07C16.5 9.01 14.48 7 12 7c-.37 0-.72.05-1.07.14zM2.01 3.87l2.68 2.68C3.06 7.83 1.77 9.53 1 11.5 2.73 15.890 7 19 12 19c1.52 0 2.98-.29 4.32-.82l3.42 3.42 1.41-1.41L3.42 2.45 2.01 3.87zm7.5 7.5l2.61 2.61c-.04.01-.08.02-.12.02-1.38 0-2.5-1.12-2.5-2.5 0-.05.01-.08.01-.13zm-3.4-3.4l1.75 1.75c-.23.55-.36 1.15-.36 1.78 0 2.48 2.02 4.5 4.5 4.5.63 0 1.23-.13 1.77-.36l.98.98c-.88.24-1.8.38-2.75.38-3.79 0-7.170-2.13-8.82-5.5.7-1.43 1.72-2.61 2.930-3.53z"/></svg>
<div class="a" style="left:1781.00px;top:962.00px;width:12.00px;height:1.50px;background:#c4c6c9"></div>
<div class="a" style="left:490.30px;top:1009.20px;width:19.50px;height:19.30px;border:2px solid #c4c6c9;border-radius:2.5px;box-sizing:border-box"></div>
<svg class="a" style="left:531.40px;top:1009.40px;width:21.20px;height:20.60px;" viewBox="0.6 0.8 22.8 21.6" preserveAspectRatio="none"><path d="M12 2L14.81 8.63L22 9.24L16.54 13.97L18.18 21L12 17.27L5.82 21L7.46 13.97L2 9.24L9.19 8.63Z" fill="none" stroke="#c0c3c8" stroke-width="2.2" stroke-linejoin="miter" stroke-miterlimit="3"/></svg>
<svg class="a" style="left:574.10px;top:1010.50px;width:20.30px;height:16.90px;" viewBox="0 0 20.3 16.9" preserveAspectRatio="none"><path d="M1.6 1.1H14.6L19 8.45L14.6 15.8H1.6L6.6 8.45Z" fill="none" stroke="#c0c3c8" stroke-width="2.2" stroke-linejoin="miter"/></svg>
<div class="t " style="top:1009.59px;font-size:19.5px;color:#1f1f1f;letter-spacing:-0.543px;left:612.30px;">Streak CRM</div>
<div class="t " style="top:1009.59px;font-size:19.5px;color:#1f1f1f;letter-spacing:0.154px;left:890.50px;">Our 4-day work week, bulk pipeline edits, and miniature obsessions</div>
<div class="t " style="top:1009.59px;font-size:19.5px;color:#5f6368;letter-spacing:0.011px;left:1490.70px;">- Internet snacks, Streak upd...</div>
<div class="t " style="top:1011.21px;font-size:17px;color:#3c3c3c;letter-spacing:-0.333px;right:105.83px;">6/2/22</div>
<svg class="a" style="left:1968.00px;top:134.00px;width:22.50px;height:22.00px;" viewBox="0 0 22 22" preserveAspectRatio="none"><rect x="1.2" y="1.2" width="19.6" height="19.6" fill="none" stroke="#e8713a" stroke-width="2.4"/><line x1="1" y1="11" x2="21" y2="11" stroke="#e8713a" stroke-width="2.4"/><line x1="11" y1="11" x2="11" y2="21" stroke="#e8713a" stroke-width="2.4"/></svg>
<svg class="a" style="left:1968.00px;top:212.00px;width:22.50px;height:21.60px;" viewBox="0 0 22 22" preserveAspectRatio="none"><rect width="22" height="22" rx="2.5" fill="#ee6f34"/><path d="M5 11l4 4 8-8" fill="none" stroke="#fff" stroke-width="2.4"/></svg>
<svg class="a" style="left:1966.00px;top:288.00px;width:26.00px;height:24.60px;" viewBox="0 0 26 26" preserveAspectRatio="none"><rect width="26" height="26" rx="2" fill="#4285f4"/><rect x="5.5" y="5.5" width="15" height="15" fill="#fff"/><path d="M20.5 5.5H26V20.5L20.5 26z" fill="#fbbc04"/><path d="M0 20.5h20.5V26H2a2 2 0 0 1-2-2z" fill="#34a853"/><text x="13" y="18" font-size="10" font-family="Liberation Sans" font-weight="bold" fill="#4285f4" text-anchor="middle">31</text></svg>
<svg class="a" style="left:1966.00px;top:365.80px;width:26.00px;height:25.90px;" viewBox="0 0 26 26" preserveAspectRatio="none"><rect width="26" height="26" rx="2.5" fill="#f6bf26"/><circle cx="13" cy="11.5" r="4.8" fill="#fff"/><rect x="10.5" y="16" width="5" height="3.5" fill="#fff"/></svg>
<svg class="a" style="left:1967.80px;top:442.00px;width:23.00px;height:25.80px;" viewBox="0 0 23 26" preserveAspectRatio="none"><circle cx="11" cy="14" r="9" fill="none" stroke="#3a6ee8" stroke-width="3.2"/><path d="M6.5 13.5l4 4 8-9" fill="none" stroke="#3a6ee8" stroke-width="3.2"/><path d="M16 2l6 0 0 6z" fill="#3a6ee8"/></svg>
<svg class="a" style="left:1969.00px;top:522.40px;width:21.80px;height:23.00px;" viewBox="0 0 22 23" preserveAspectRatio="none"><circle cx="11" cy="5.5" r="5" fill="#1a73e8"/><path d="M1 23v-5c0-4 4-6.5 10-6.5s10 2.5 10 6.5v5z" fill="#1a73e8"/></svg>
<div class="a" style="left:1964.40px;top:595.00px;width:28.60px;height:1.00px;background:#e0e0e4"></div>
<svg class="a" style="left:1969.00px;top:648.90px;width:21.00px;height:20.10px;" viewBox="0 0 21 20" preserveAspectRatio="none"><path d="M10.5 0v20M0 10h21" stroke="#1f1f1f" stroke-width="2.2"/></svg>
</body></html>
